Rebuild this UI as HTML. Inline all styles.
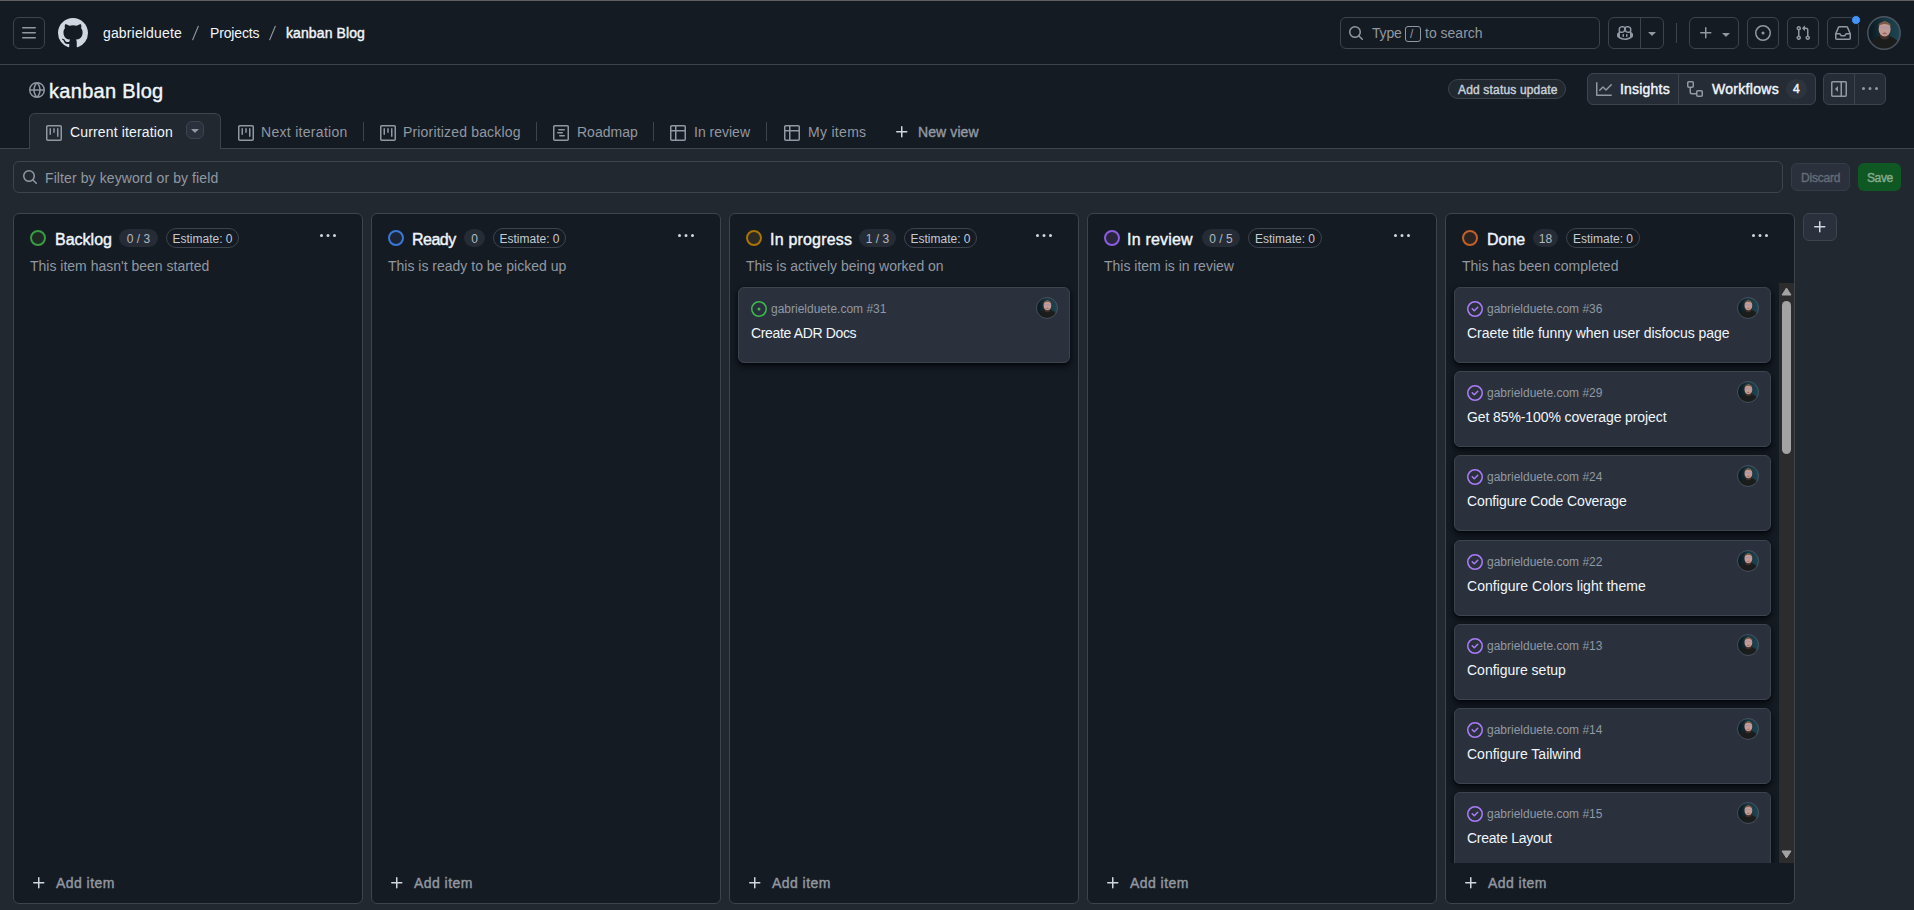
<!DOCTYPE html>
<html><head><meta charset="utf-8">
<style>
*{box-sizing:border-box;margin:0;padding:0}
html,body{width:1914px;height:910px;overflow:hidden;background:#212830}
body{font-family:"Liberation Sans",sans-serif;color:#f0f6fc;position:relative}
.a{position:absolute}
.t{position:absolute;white-space:pre;line-height:1}
.f14{font-size:14px}.f12{font-size:12px}.f16{font-size:16px}.f20{font-size:20px}
.b{font-weight:400;-webkit-text-stroke-width:0.4px}
.mu{color:#9198a1}
.ic{position:absolute;fill:#9198a1}
.btn{position:absolute;border:1px solid #3d444d;border-radius:6px}
</style></head><body>
<!-- HEADER -->
<div class="a" style="left:0;top:0;width:1914px;height:149px;background:#151b23"></div>
<div class="a" style="left:0;top:0;width:1914px;height:1px;background:#5f5f5f"></div>
<div class="a" style="left:0;top:64px;width:1914px;height:1px;background:#3d444d"></div>
<div class="a" style="left:0;top:148px;width:1914px;height:1px;background:#3d444d"></div>

<!-- hamburger -->
<div class="btn" style="left:13px;top:17px;width:32px;height:32px"></div>
<svg class="ic" style="left:21px;top:25px" width="16" height="16" viewBox="0 0 16 16"><path d="M1 2.75A.75.75 0 0 1 1.75 2h12.5a.75.75 0 0 1 0 1.5H1.75A.75.75 0 0 1 1 2.75Zm0 5A.75.75 0 0 1 1.75 7h12.5a.75.75 0 0 1 0 1.5H1.75A.75.75 0 0 1 1 7.75ZM1.75 12h12.5a.75.75 0 0 1 0 1.5H1.75a.75.75 0 0 1 0-1.5Z"/></svg>
<!-- github logo -->
<svg class="ic" style="left:58px;top:18px;fill:#d1d7e0" width="30" height="30" viewBox="0 0 16 16"><path d="M8 0c4.42 0 8 3.58 8 8a8.013 8.013 0 0 1-5.45 7.59c-.4.08-.55-.17-.55-.38 0-.27.01-1.13.01-2.2 0-.75-.25-1.23-.54-1.48 1.780-.2 3.65-.88 3.65-3.95 0-.88-.31-1.59-.82-2.15.08-.2.36-1.02-.08-2.12 0 0-.67-.22-2.2.82-.64-.18-1.320-.27-2-.27-.68 0-1.36.09-2 .27-1.53-1.03-2.2-.82-2.2-.82-.44 1.1-.16 1.92-.08 2.12-.51.56-.82 1.28-.82 2.15 0 3.06 1.86 3.75 3.64 3.95-.23.2-.44.55-.51 1.07-.46.21-1.61.55-2.33-.66-.15-.24-.6-.83-1.23-.82-.67.01-.27.38.01.53.34.19.73.9.82 1.13.16.45.68 1.31 2.690.94 0 .67.01 1.3.01 1.49 0 .21-.15.45-.55.38A7.995 7.995 0 0 1 0 8c0-4.42 3.58-8 8-8Z"/></svg>
<!-- breadcrumbs -->
<div class="t f14" style="left:103px;top:26px;letter-spacing:0.15px;color:#f0f6fc">gabrielduete</div>
<svg class="a" style="left:190px;top:24px" width="10" height="18"><line x1="8.3" y1="2.3" x2="2.7" y2="15.7" stroke="#9198a1" stroke-width="1.1" stroke-linecap="round"/></svg>
<div class="t f14" style="left:210px;top:26px;letter-spacing:-0.15px;color:#f0f6fc">Projects</div>
<svg class="a" style="left:267px;top:24px" width="10" height="18"><line x1="8.3" y1="2.3" x2="2.7" y2="15.7" stroke="#9198a1" stroke-width="1.1" stroke-linecap="round"/></svg>
<div class="t f14 b" style="left:286px;top:26px;letter-spacing:0.1px;color:#f0f6fc">kanban Blog</div>

<!-- search -->
<div class="btn" style="left:1340px;top:17px;width:260px;height:32px"></div>
<svg class="ic" style="left:1348px;top:25px" width="16" height="16" viewBox="0 0 16 16"><path d="M10.68 11.74a6 6 0 0 1-7.922-8.982 6 6 0 0 1 8.982 7.922l3.04 3.04a.749.749 0 0 1-.326 1.275.749.749 0 0 1-.734-.215ZM11.5 7a4.499 4.499 0 1 0-8.997 0A4.499 4.499 0 0 0 11.5 7Z"/></svg>
<div class="t f14 mu" style="left:1372px;top:26px;letter-spacing:-0.2px">Type</div>
<div class="a" style="left:1405px;top:26px;width:16px;height:16px;border:1px solid #9198a1;border-radius:3px"></div>
<div class="t f12 mu" style="left:1410px;top:28px">/</div>
<div class="t f14 mu" style="left:1425px;top:26px">to search</div>

<!-- copilot group -->
<div class="btn" style="left:1608px;top:17px;width:56px;height:32px"></div>
<div class="a" style="left:1640px;top:17px;width:1px;height:32px;background:#3d444d"></div>
<svg class="ic" style="left:1617px;top:25px" width="16" height="16" viewBox="0 0 16 16"><path d="M7.998 15.035c-4.562 0-7.873-2.914-7.998-3.749V9.338c.085-.628.677-1.686 1.588-2.065.013-.07.024-.143.036-.218.029-.183.06-.384.126-.612-.201-.508-.254-1.084-.254-1.656 0-.87.128-1.769.693-2.484.579-.733 1.494-1.124 2.724-1.261 1.206-.134 2.262.034 2.944.765.05.053.096.108.139.165.044-.057.094-.112.143-.165.682-.731 1.738-.899 2.944-.765 1.23.137 2.145.528 2.724 1.261.566.715.693 1.614.693 2.484 0 .572-.053 1.148-.254 1.656.066.228.098.429.126.612.012.076.024.148.037.218.924.385 1.522 1.471 1.591 2.095v1.872c0 .766-3.351 3.795-8.002 3.795Zm0-1.485c2.28 0 4.584-1.11 5.002-1.433V7.862l-.023-.116c-.49.21-1.075.291-1.727.291-1.146 0-2.059-.327-2.71-.991A3.222 3.222 0 0 1 8 6.303a3.24 3.24 0 0 1-.544.743c-.65.664-1.563.991-2.71.991-.652 0-1.236-.081-1.727-.291l-.023.116v4.255c.419.323 2.722 1.433 5.002 1.433ZM6.762 2.83c-.193-.206-.637-.413-1.682-.297-1.019.113-1.479.404-1.713.7-.247.312-.369.789-.369 1.554 0 .793.129 1.171.308 1.371.162.181.519.379 1.442.379.853 0 1.339-.235 1.638-.54.315-.322.527-.827.617-1.553.117-.935-.037-1.395-.241-1.614Zm4.155-.297c-1.044-.116-1.488.091-1.681.297-.204.219-.359.679-.242 1.614.091.726.303 1.231.618 1.553.299.305.784.54 1.638.54.922 0 1.28-.198 1.442-.379.179-.2.308-.578.308-1.371 0-.765-.123-1.242-.37-1.554-.233-.296-.693-.587-1.713-.7Z"/><path d="M6.25 9.037a.75.75 0 0 1 .75.75v1.501a.75.75 0 0 1-1.5 0V9.787a.75.75 0 0 1 .75-.75Zm4.25.75v1.501a.75.75 0 0 1-1.5 0V9.787a.75.75 0 0 1 1.5 0Z"/></svg>
<svg class="ic" style="left:1644px;top:25px" width="16" height="16" viewBox="0 0 16 16"><path d="m4.427 7.427 3.396 3.396a.25.25 0 0 0 .354 0l3.396-3.396A.25.25 0 0 0 11.396 7H4.604a.25.25 0 0 0-.177.427Z"/></svg>
<div class="a" style="left:1676px;top:23px;width:1px;height:20px;background:#3d444d"></div>
<!-- plus group -->
<div class="btn" style="left:1689px;top:17px;width:50px;height:32px"></div>
<svg class="ic" style="left:1698px;top:25px" width="16" height="16" viewBox="0 0 16 16"><path d="M7.75 2a.75.75 0 0 1 .75.75V7h4.25a.75.75 0 0 1 0 1.5H8.5v4.25a.75.75 0 0 1-1.5 0V8.5H2.75a.75.75 0 0 1 0-1.5H7V2.75A.75.75 0 0 1 7.75 2Z"/></svg>
<svg class="ic" style="left:1718px;top:26px" width="16" height="16" viewBox="0 0 16 16"><path d="m4.427 7.427 3.396 3.396a.25.25 0 0 0 .354 0l3.396-3.396A.25.25 0 0 0 11.396 7H4.604a.25.25 0 0 0-.177.427Z"/></svg>
<!-- issues -->
<div class="btn" style="left:1747px;top:17px;width:32px;height:32px"></div>
<svg class="ic" style="left:1755px;top:25px" width="16" height="16" viewBox="0 0 16 16"><path d="M8 9.5a1.5 1.5 0 1 0 0-3 1.5 1.5 0 0 0 0 3Z"/><path d="M8 0a8 8 0 1 1 0 16A8 8 0 0 1 8 0ZM1.5 8a6.5 6.5 0 1 0 13 0 6.5 6.5 0 0 0-13 0Z"/></svg>
<!-- PR -->
<div class="btn" style="left:1787px;top:17px;width:32px;height:32px"></div>
<svg class="ic" style="left:1795px;top:25px" width="16" height="16" viewBox="0 0 16 16"><path d="M1.5 3.25a2.25 2.25 0 1 1 3 2.122v5.256a2.251 2.251 0 1 1-1.5 0V5.372A2.25 2.25 0 0 1 1.5 3.25Zm5.677-.177L9.573.677A.25.25 0 0 1 10 .854V2.5h1A2.5 2.5 0 0 1 13.5 5v5.628a2.251 2.251 0 1 1-1.5 0V5a1 1 0 0 0-1-1h-1v1.646a.25.25 0 0 1-.427.177L7.177 3.427a.25.25 0 0 1 0-.354ZM3.75 2.5a.75.75 0 1 0 0 1.5.75.75 0 0 0 0-1.5Zm0 9.5a.75.75 0 1 0 0 1.5.75.75 0 0 0 0-1.5Zm8.25.75a.75.75 0 1 0 1.5 0 .75.75 0 0 0-1.5 0Z"/></svg>
<!-- inbox -->
<div class="btn" style="left:1827px;top:17px;width:32px;height:32px"></div>
<svg class="ic" style="left:1835px;top:25px" width="16" height="16" viewBox="0 0 16 16"><path d="M2.8 2.06A1.75 1.75 0 0 1 4.41 1h7.18c.7 0 1.333.417 1.61 1.06l2.74 6.395c.04.093.06.194.06.295v4.5A1.75 1.75 0 0 1 14.25 15H1.75A1.75 1.75 0 0 1 0 13.25v-4.5c0-.101.02-.202.06-.295Zm1.61.44a.25.25 0 0 0-.23.152L1.887 8H4.75a.75.75 0 0 1 .6.3L6.625 10h2.75l1.275-1.7a.75.75 0 0 1 .6-.3h2.863L11.82 2.652a.25.25 0 0 0-.23-.152Zm10.09 7h-2.875l-1.275 1.7a.75.75 0 0 1-.6.3h-3.5a.75.75 0 0 1-.6-.3L4.375 9.5H1.5v3.75c0 .138.112.25.25.25h12.5a.25.25 0 0 0 .25-.25Z"/></svg>
<div class="a" style="left:1851px;top:15px;width:10px;height:10px;border-radius:50%;background:#4493f8;border:1px solid #151b23"></div>
<!-- avatar -->
<svg class="a" style="left:1867px;top:16px" width="34" height="34" viewBox="0 0 34 34"><defs><clipPath id="kh"><circle cx="17" cy="17" r="16.5"/></clipPath><linearGradient id="gh" x1="0" x2="1" y1="0" y2="0"><stop offset="0" stop-color="#08141a"/><stop offset="0.5" stop-color="#173640"/><stop offset="1" stop-color="#1f4652"/></linearGradient></defs><g clip-path="url(#kh)"><rect width="34" height="34" fill="url(#gh)"/><path d="M1 34 L3 27 C5 23 9 21 13 20 L22 20 C26 21 29.5 23 31.5 27 L34 34Z" fill="#1b1d1d"/><ellipse cx="17.5" cy="20" rx="4.6" ry="3.4" fill="#3e2f2a"/><ellipse cx="17.6" cy="13" rx="6" ry="7.6" fill="#c49a92"/><path d="M11.4 10.5 C10.8 4.2 24.4 4.2 23.8 10.5 C22.3 7 12.9 7 11.4 10.5Z" fill="#7b5b47"/><rect x="12" y="10.8" width="11.2" height="1.8" rx="0.9" fill="#8c8ad6" opacity="0.35"/><ellipse cx="17.6" cy="17.4" rx="2.2" ry="0.9" fill="#9c6464"/></g><circle cx="17" cy="17" r="16.2" fill="none" stroke="#4b5361" stroke-width="1.5"/></svg>

<!-- TITLE ROW -->
<svg class="ic" style="left:29px;top:82px" width="16" height="16" viewBox="0 0 16 16"><path d="M8 0a8 8 0 1 1 0 16A8 8 0 0 1 8 0ZM5.78 8.75a9.64 9.64 0 0 0 1.363 4.177c.255.426.542.832.857 1.215.245-.296.551-.705.857-1.215A9.64 9.64 0 0 0 10.22 8.75Zm4.44-1.5a9.64 9.64 0 0 0-1.363-4.177c-.307-.51-.612-.919-.857-1.215a9.927 9.927 0 0 0-.857 1.215A9.64 9.64 0 0 0 5.78 7.25Zm-5.944 1.5H1.543a6.507 6.507 0 0 0 4.666 5.5c-.123-.181-.24-.365-.352-.552-.715-1.192-1.437-2.874-1.581-4.948Zm-2.733-1.5h2.733c.144-2.074.866-3.756 1.58-4.948.12-.197.237-.381.353-.552a6.507 6.507 0 0 0-4.666 5.5Zm10.181 1.5c-.144 2.074-.866 3.756-1.58 4.948-.12.197-.237.381-.353.552a6.507 6.507 0 0 0 4.666-5.5Zm2.733-1.5a6.507 6.507 0 0 0-4.666-5.5c.123.181.24.365.353.552.714 1.192 1.436 2.874 1.58 4.948Z"/></svg>
<div class="t f20 b" style="left:49px;top:81px;letter-spacing:0.3px;color:#f0f6fc">kanban Blog</div>

<div class="a" style="left:1448px;top:79px;width:118px;height:20px;border:1px solid #3d444d;border-radius:10px;background:#212830"></div>
<div class="t f12 b" style="left:1458px;top:84px;letter-spacing:0.17px;color:#c9d1d9">Add status update</div>

<div class="btn" style="left:1587px;top:73px;width:229px;height:32px;background:#262c36"></div>
<div class="a" style="left:1678px;top:73px;width:1px;height:32px;background:#3d444d"></div>
<svg class="ic" style="left:1596px;top:81px" width="16" height="16" viewBox="0 0 16 16"><path d="M1.5 1.75V13.5h13.75a.75.75 0 0 1 0 1.5H.75a.75.75 0 0 1-.75-.75V1.75a.75.75 0 0 1 1.5 0Zm14.28 2.53-5.25 5.25a.75.75 0 0 1-1.06 0L7 7.06 4.28 9.78a.751.751 0 0 1-1.042-.018.751.751 0 0 1-.018-1.042l3.250-3.25a.75.75 0 0 1 1.06 0L10 7.94l4.72-4.72a.751.751 0 0 1 1.042.018.751.751 0 0 1 .018 1.042Z"/></svg>
<div class="t f14 b" style="left:1620px;top:82px;letter-spacing:0.2px;color:#f0f6fc">Insights</div>
<svg class="ic" style="left:1687px;top:81px" width="16" height="16" viewBox="0 0 16 16"><path d="M0 1.75C0 .784.784 0 1.75 0h3.5C6.216 0 7 .784 7 1.75v3.5A1.75 1.75 0 0 1 5.25 7H4v4a1 1 0 0 0 1 1h4v-1.25C9 9.784 9.784 9 10.750 9h3.5c.966 0 1.75.784 1.75 1.75v3.5A1.75 1.75 0 0 1 14.25 16h-3.5A1.75 1.75 0 0 1 9 14.25v-.75H5A2.5 2.5 0 0 1 2.5 11V7h-.75A1.75 1.75 0 0 1 0 5.25Zm1.75-.25a.25.25 0 0 0-.25.25v3.5c0 .138.112.25.25.25h3.5a.25.25 0 0 0 .25-.25v-3.5a.25.25 0 0 0-.25-.25Zm9 9a.25.25 0 0 0-.25.25v3.5c0 .138.112.25.25.25h3.5a.25.25 0 0 0 .25-.25v-3.5a.25.25 0 0 0-.25-.25Z"/></svg>
<div class="t f14 b" style="left:1712px;top:82px;letter-spacing:0.3px;color:#f0f6fc">Workflows</div>
<div class="a" style="left:1786px;top:79px;width:21px;height:20px;border-radius:10px;background:#2d343e"></div>
<div class="t f12 b" style="left:1793px;top:83px;color:#f0f6fc">4</div>

<div class="btn" style="left:1823px;top:73px;width:63px;height:32px;background:#262c36"></div>
<div class="a" style="left:1854px;top:73px;width:1px;height:32px;background:#3d444d"></div>
<svg class="ic" style="left:1831px;top:81px" width="16" height="16" viewBox="0 0 16 16"><path d="m4.177 7.823 2.396-2.396A.25.25 0 0 1 7 5.604v4.792a.25.25 0 0 1-.427.177L4.177 8.177a.25.25 0 0 1 0-.354Z"/><path d="M0 1.75C0 .784.784 0 1.75 0h12.5C15.216 0 16 .784 16 1.750v12.5A1.75 1.75 0 0 1 14.25 16H1.75A1.75 1.75 0 0 1 0 14.25Zm1.75-.25a.25.25 0 0 0-.25.25v12.5c0 .138.112.25.25.25H9.5v-13Zm12.5 13a.25.25 0 0 0 .25-.25V1.75a.25.25 0 0 0-.25-.25H11v13Z"/></svg>
<svg class="ic" style="left:1862px;top:81px" width="16" height="16" viewBox="0 0 16 16"><path d="M8 9a1.5 1.5 0 1 0 0-3 1.5 1.5 0 0 0 0 3ZM1.5 9a1.5 1.5 0 1 0 0-3 1.5 1.5 0 0 0 0 3Zm13 0a1.5 1.5 0 1 0 0-3 1.5 1.5 0 0 0 0 3Z"/></svg>

<!-- TABS -->
<div class="a" style="left:29px;top:113px;width:192px;height:36px;background:#212830;border:1px solid #3d444d;border-bottom:none;border-radius:6px 6px 0 0"></div>
<svg class="ic" style="left:46px;top:125px" width="16" height="16" viewBox="0 0 16 16"><path d="M1.75 0h12.5C15.216 0 16 .784 16 1.75v12.5A1.75 1.75 0 0 1 14.25 16H1.75A1.75 1.75 0 0 1 0 14.25V1.75C0 .784.784 0 1.75 0ZM1.5 1.75v12.5c0 .138.112.25.25.25h12.5a.25.25 0 0 0 .25-.25V1.75a.25.25 0 0 0-.25-.25H1.75a.25.25 0 0 0-.25.25ZM11.75 3a.75.75 0 0 1 .75.75v7.5a.75.75 0 0 1-1.5 0v-7.5a.75.75 0 0 1 .75-.75Zm-8.25.75a.75.75 0 0 1 1.5 0v5.5a.75.75 0 0 1-1.5 0ZM8 3a.75.75 0 0 1 .75.75v3.5a.75.75 0 0 1-1.5 0v-3.5A.75.75 0 0 1 8 3Z"/></svg>
<div class="t f14" style="left:70px;top:125px;letter-spacing:0.15px;color:#f0f6fc">Current iteration</div>
<div class="a" style="left:186px;top:121px;width:18px;height:18px;border:1px solid #3d444d;border-radius:6px;background:#2a313c"></div>
<svg class="ic" style="left:187px;top:122px" width="16" height="16" viewBox="0 0 16 16"><path d="m4.427 7.427 3.396 3.396a.25.25 0 0 0 .354 0l3.396-3.396A.25.25 0 0 0 11.396 7H4.604a.25.25 0 0 0-.177.427Z"/></svg>

<svg class="ic" style="left:238px;top:125px" width="16" height="16" viewBox="0 0 16 16"><path d="M1.75 0h12.5C15.216 0 16 .784 16 1.75v12.5A1.75 1.75 0 0 1 14.25 16H1.75A1.75 1.75 0 0 1 0 14.25V1.75C0 .784.784 0 1.75 0ZM1.5 1.75v12.5c0 .138.112.25.25.25h12.5a.25.25 0 0 0 .25-.25V1.75a.25.25 0 0 0-.25-.25H1.75a.25.25 0 0 0-.25.25ZM11.75 3a.75.75 0 0 1 .75.75v7.5a.75.75 0 0 1-1.5 0v-7.5a.75.75 0 0 1 .75-.75Zm-8.25.75a.75.75 0 0 1 1.5 0v5.5a.75.75 0 0 1-1.5 0ZM8 3a.75.75 0 0 1 .75.75v3.5a.75.75 0 0 1-1.5 0v-3.5A.75.75 0 0 1 8 3Z"/></svg>
<div class="t f14 mu" style="left:261px;top:125px;letter-spacing:0.3px">Next iteration</div>
<div class="a" style="left:363px;top:122px;width:1px;height:19px;background:#3d444d"></div>
<svg class="ic" style="left:380px;top:125px" width="16" height="16" viewBox="0 0 16 16"><path d="M1.75 0h12.5C15.216 0 16 .784 16 1.75v12.5A1.75 1.75 0 0 1 14.25 16H1.75A1.75 1.75 0 0 1 0 14.25V1.75C0 .784.784 0 1.75 0ZM1.5 1.75v12.5c0 .138.112.25.25.25h12.5a.25.25 0 0 0 .25-.25V1.75a.25.25 0 0 0-.25-.25H1.75a.25.25 0 0 0-.25.25ZM11.75 3a.75.75 0 0 1 .75.75v7.5a.75.75 0 0 1-1.5 0v-7.5a.75.75 0 0 1 .75-.75Zm-8.25.75a.75.75 0 0 1 1.5 0v5.5a.75.75 0 0 1-1.5 0ZM8 3a.75.75 0 0 1 .75.75v3.5a.75.75 0 0 1-1.5 0v-3.5A.75.75 0 0 1 8 3Z"/></svg>
<div class="t f14 mu" style="left:403px;top:125px;letter-spacing:0.17px">Prioritized backlog</div>
<div class="a" style="left:536px;top:122px;width:1px;height:19px;background:#3d444d"></div>
<svg class="ic" style="left:553px;top:125px" width="16" height="16" viewBox="0 0 16 16"><path d="M4.75 7a.75.75 0 0 0 0 1.5h4.5a.75.75 0 0 0 0-1.5h-4.5ZM5 4.75A.75.75 0 0 1 5.75 4h5.5a.75.75 0 0 1 0 1.5h-5.5A.75.75 0 0 1 5 4.75ZM6.75 10a.75.75 0 0 0 0 1.5h4.5a.75.75 0 0 0 0-1.5h-4.5Z"/><path d="M0 1.75C0 .784.784 0 1.75 0h12.5C15.216 0 16 .784 16 1.75v12.5A1.75 1.75 0 0 1 14.25 16H1.75A1.75 1.75 0 0 1 0 14.25Zm1.75-.25a.25.25 0 0 0-.25.25v12.5c0 .138.112.25.25.25h12.5a.25.25 0 0 0 .25-.25V1.75a.25.25 0 0 0-.25-.25Z"/></svg>
<div class="t f14 mu" style="left:577px;top:125px">Roadmap</div>
<div class="a" style="left:653px;top:122px;width:1px;height:19px;background:#3d444d"></div>
<svg class="ic" style="left:670px;top:125px" width="16" height="16" viewBox="0 0 16 16"><path d="M0 1.75C0 .784.784 0 1.75 0h12.5C15.216 0 16 .784 16 1.75v12.5A1.75 1.75 0 0 1 14.25 16H1.75A1.75 1.75 0 0 1 0 14.25ZM6.5 6.5v8h7.75a.25.25 0 0 0 .25-.25V6.5Zm8-1.5V1.75a.25.25 0 0 0-.25-.25H6.5V5Zm-13 1.5v7.750c0 .138.112.25.25.25H5v-8ZM5 5V1.5H1.75a.25.25 0 0 0-.25.25V5Z"/></svg>
<div class="t f14 mu" style="left:694px;top:125px">In review</div>
<div class="a" style="left:766px;top:122px;width:1px;height:19px;background:#3d444d"></div>
<svg class="ic" style="left:784px;top:125px" width="16" height="16" viewBox="0 0 16 16"><path d="M0 1.75C0 .784.784 0 1.75 0h12.5C15.216 0 16 .784 16 1.75v12.5A1.75 1.75 0 0 1 14.25 16H1.75A1.75 1.75 0 0 1 0 14.25ZM6.5 6.5v8h7.75a.25.25 0 0 0 .25-.25V6.5Zm8-1.5V1.75a.25.25 0 0 0-.25-.25H6.5V5Zm-13 1.5v7.750c0 .138.112.25.25.25H5v-8ZM5 5V1.5H1.75a.25.25 0 0 0-.25.25V5Z"/></svg>
<div class="t f14 mu" style="left:808px;top:125px;letter-spacing:0.3px">My items</div>
<svg class="ic" style="left:894px;top:124px;fill:#d1d7e0" width="16" height="16" viewBox="0 0 16 16"><path d="M7.75 2a.75.75 0 0 1 .75.75V7h4.25a.75.75 0 0 1 0 1.5H8.5v4.25a.75.75 0 0 1-1.5 0V8.5H2.75a.75.75 0 0 1 0-1.5H7V2.75A.75.75 0 0 1 7.75 2Z"/></svg>
<div class="t f14 b mu" style="left:918px;top:125px;letter-spacing:0.1px">New view</div>

<!-- BOARD -->
<!--BOARD-->
<div class="btn" style="left:13px;top:161px;width:1770px;height:32px"></div>
<svg class="ic" style="left:22px;top:169px" width="16" height="16" viewBox="0 0 16 16"><path d="M10.68 11.74a6 6 0 0 1-7.922-8.982 6 6 0 0 1 8.982 7.922l3.04 3.04a.749.749 0 0 1-.326 1.275.749.749 0 0 1-.734-.215ZM11.5 7a4.499 4.499 0 1 0-8.997 0A4.499 4.499 0 0 0 11.5 7Z"/></svg>
<div class="t f14 mu" style="left:45px;top:171px;letter-spacing:0.1px">Filter by keyword or by field</div>
<div class="a" style="left:1791px;top:163px;width:59px;height:28px;border:1px solid #353c46;border-radius:6px;background:#2a313c"></div>
<div class="t f12 b" style="left:1801px;top:172px;letter-spacing:-0.2px;color:#656c76">Discard</div>
<div class="a" style="left:1858px;top:163px;width:43px;height:28px;border-radius:6px;background:#105823"></div>
<div class="t f12 b" style="left:1867px;top:172px;letter-spacing:-0.4px;color:#86ab8f">Save</div>
<div class="a" style="left:1803px;top:213px;width:34px;height:28px;border:1px solid #3d444d;border-radius:6px;background:#2a313c"></div>
<svg class="ic" style="left:1812px;top:219px;fill:#d1d7e0" width="16" height="16" viewBox="0 0 16 16"><path d="M7.75 2a.75.75 0 0 1 .75.75V7h4.25a.75.75 0 0 1 0 1.5H8.5v4.25a.75.75 0 0 1-1.5 0V8.5H2.75a.75.75 0 0 1 0-1.5H7V2.75A.75.75 0 0 1 7.75 2Z"/></svg>
<div class="a" style="left:13px;top:213px;width:350px;height:691px;background:#151b23;border:1px solid #3d444d;border-radius:6px"></div>
<div class="a" style="left:30px;top:230px;width:16px;height:16px;border-radius:50%;border:2px solid #3b9a45;background:#1d2a24"></div>
<div class="t f16 b" style="left:55px;top:232px;letter-spacing:0px;color:#f0f6fc">Backlog</div>
<div class="a" style="left:119px;top:229px;width:39px;height:18px;border-radius:9px;background:#252c36"></div>
<div class="t f12" style="left:119px;top:233px;width:39px;text-align:center;color:#b3b9c0">0 / 3</div>
<div class="a" style="left:166px;top:228px;width:73px;height:20px;border-radius:10px;border:1px solid #3d444d"></div>
<div class="t f12" style="left:166px;top:233px;width:73px;text-align:center;color:#c4cad1">Estimate: 0</div>
<div class="t f14 mu" style="left:30px;top:259px">This item hasn't been started</div>
<svg class="ic" style="left:320px;top:228px;fill:#d1d7e0" width="16" height="16" viewBox="0 0 16 16"><path d="M8 9a1.5 1.5 0 1 0 0-3 1.5 1.5 0 0 0 0 3ZM1.5 9a1.5 1.5 0 1 0 0-3 1.5 1.5 0 0 0 0 3Zm13 0a1.5 1.5 0 1 0 0-3 1.5 1.5 0 0 0 0 3Z"/></svg>
<svg class="ic" style="left:31px;top:875px;fill:#d1d7e0" width="16" height="16" viewBox="0 0 16 16"><path d="M7.75 2a.75.75 0 0 1 .75.75V7h4.25a.75.75 0 0 1 0 1.5H8.5v4.25a.75.75 0 0 1-1.5 0V8.5H2.75a.75.75 0 0 1 0-1.5H7V2.75A.75.75 0 0 1 7.75 2Z"/></svg>
<div class="t f14 b mu" style="left:56px;top:876px;letter-spacing:0.45px">Add item</div>
<div class="a" style="left:371px;top:213px;width:350px;height:691px;background:#151b23;border:1px solid #3d444d;border-radius:6px"></div>
<div class="a" style="left:388px;top:230px;width:16px;height:16px;border-radius:50%;border:2px solid #3a78d8;background:#1c2538"></div>
<div class="t f16 b" style="left:412px;top:232px;letter-spacing:-0.5px;color:#f0f6fc">Ready</div>
<div class="a" style="left:464px;top:229px;width:21px;height:18px;border-radius:9px;background:#252c36"></div>
<div class="t f12" style="left:464px;top:233px;width:21px;text-align:center;color:#b3b9c0">0</div>
<div class="a" style="left:493px;top:228px;width:73px;height:20px;border-radius:10px;border:1px solid #3d444d"></div>
<div class="t f12" style="left:493px;top:233px;width:73px;text-align:center;color:#c4cad1">Estimate: 0</div>
<div class="t f14 mu" style="left:388px;top:259px">This is ready to be picked up</div>
<svg class="ic" style="left:678px;top:228px;fill:#d1d7e0" width="16" height="16" viewBox="0 0 16 16"><path d="M8 9a1.5 1.5 0 1 0 0-3 1.5 1.5 0 0 0 0 3ZM1.5 9a1.5 1.5 0 1 0 0-3 1.5 1.5 0 0 0 0 3Zm13 0a1.5 1.5 0 1 0 0-3 1.5 1.5 0 0 0 0 3Z"/></svg>
<svg class="ic" style="left:389px;top:875px;fill:#d1d7e0" width="16" height="16" viewBox="0 0 16 16"><path d="M7.75 2a.75.75 0 0 1 .75.75V7h4.25a.75.75 0 0 1 0 1.5H8.5v4.25a.75.75 0 0 1-1.5 0V8.5H2.75a.75.75 0 0 1 0-1.5H7V2.75A.75.75 0 0 1 7.75 2Z"/></svg>
<div class="t f14 b mu" style="left:414px;top:876px;letter-spacing:0.45px">Add item</div>
<div class="a" style="left:729px;top:213px;width:350px;height:691px;background:#151b23;border:1px solid #3d444d;border-radius:6px"></div>
<div class="a" style="left:746px;top:230px;width:16px;height:16px;border-radius:50%;border:2px solid #a87406;background:#2c2a22"></div>
<div class="t f16 b" style="left:770px;top:232px;letter-spacing:0.2px;color:#f0f6fc">In progress</div>
<div class="a" style="left:859px;top:229px;width:37px;height:18px;border-radius:9px;background:#252c36"></div>
<div class="t f12" style="left:859px;top:233px;width:37px;text-align:center;color:#b3b9c0">1 / 3</div>
<div class="a" style="left:904px;top:228px;width:73px;height:20px;border-radius:10px;border:1px solid #3d444d"></div>
<div class="t f12" style="left:904px;top:233px;width:73px;text-align:center;color:#c4cad1">Estimate: 0</div>
<div class="t f14 mu" style="left:746px;top:259px">This is actively being worked on</div>
<svg class="ic" style="left:1036px;top:228px;fill:#d1d7e0" width="16" height="16" viewBox="0 0 16 16"><path d="M8 9a1.5 1.5 0 1 0 0-3 1.5 1.5 0 0 0 0 3ZM1.5 9a1.5 1.5 0 1 0 0-3 1.5 1.5 0 0 0 0 3Zm13 0a1.5 1.5 0 1 0 0-3 1.5 1.5 0 0 0 0 3Z"/></svg>
<svg class="ic" style="left:747px;top:875px;fill:#d1d7e0" width="16" height="16" viewBox="0 0 16 16"><path d="M7.75 2a.75.75 0 0 1 .75.75V7h4.25a.75.75 0 0 1 0 1.5H8.5v4.25a.75.75 0 0 1-1.5 0V8.5H2.75a.75.75 0 0 1 0-1.5H7V2.75A.75.75 0 0 1 7.75 2Z"/></svg>
<div class="t f14 b mu" style="left:772px;top:876px;letter-spacing:0.45px">Add item</div>
<div class="a" style="left:1087px;top:213px;width:350px;height:691px;background:#151b23;border:1px solid #3d444d;border-radius:6px"></div>
<div class="a" style="left:1104px;top:230px;width:16px;height:16px;border-radius:50%;border:2px solid #8b5de0;background:#29263d"></div>
<div class="t f16 b" style="left:1127px;top:232px;letter-spacing:0.2px;color:#f0f6fc">In review</div>
<div class="a" style="left:1202px;top:229px;width:38px;height:18px;border-radius:9px;background:#252c36"></div>
<div class="t f12" style="left:1202px;top:233px;width:38px;text-align:center;color:#b3b9c0">0 / 5</div>
<div class="a" style="left:1248px;top:228px;width:74px;height:20px;border-radius:10px;border:1px solid #3d444d"></div>
<div class="t f12" style="left:1248px;top:233px;width:74px;text-align:center;color:#c4cad1">Estimate: 0</div>
<div class="t f14 mu" style="left:1104px;top:259px">This item is in review</div>
<svg class="ic" style="left:1394px;top:228px;fill:#d1d7e0" width="16" height="16" viewBox="0 0 16 16"><path d="M8 9a1.5 1.5 0 1 0 0-3 1.5 1.5 0 0 0 0 3ZM1.5 9a1.5 1.5 0 1 0 0-3 1.5 1.5 0 0 0 0 3Zm13 0a1.5 1.5 0 1 0 0-3 1.5 1.5 0 0 0 0 3Z"/></svg>
<svg class="ic" style="left:1105px;top:875px;fill:#d1d7e0" width="16" height="16" viewBox="0 0 16 16"><path d="M7.75 2a.75.75 0 0 1 .75.75V7h4.25a.75.75 0 0 1 0 1.5H8.5v4.25a.75.75 0 0 1-1.5 0V8.5H2.75a.75.75 0 0 1 0-1.5H7V2.75A.75.75 0 0 1 7.75 2Z"/></svg>
<div class="t f14 b mu" style="left:1130px;top:876px;letter-spacing:0.45px">Add item</div>
<div class="a" style="left:1445px;top:213px;width:350px;height:691px;background:#151b23;border:1px solid #3d444d;border-radius:6px"></div>
<div class="a" style="left:1462px;top:230px;width:16px;height:16px;border-radius:50%;border:2px solid #c0602a;background:#2a2523"></div>
<div class="t f16 b" style="left:1487px;top:232px;letter-spacing:0px;color:#f0f6fc">Done</div>
<div class="a" style="left:1533px;top:229px;width:25px;height:18px;border-radius:9px;background:#252c36"></div>
<div class="t f12" style="left:1533px;top:233px;width:25px;text-align:center;color:#b3b9c0">18</div>
<div class="a" style="left:1566px;top:228px;width:74px;height:20px;border-radius:10px;border:1px solid #3d444d"></div>
<div class="t f12" style="left:1566px;top:233px;width:74px;text-align:center;color:#c4cad1">Estimate: 0</div>
<div class="t f14 mu" style="left:1462px;top:259px">This has been completed</div>
<svg class="ic" style="left:1752px;top:228px;fill:#d1d7e0" width="16" height="16" viewBox="0 0 16 16"><path d="M8 9a1.5 1.5 0 1 0 0-3 1.5 1.5 0 0 0 0 3ZM1.5 9a1.5 1.5 0 1 0 0-3 1.5 1.5 0 0 0 0 3Zm13 0a1.5 1.5 0 1 0 0-3 1.5 1.5 0 0 0 0 3Z"/></svg>
<svg class="ic" style="left:1463px;top:875px;fill:#d1d7e0" width="16" height="16" viewBox="0 0 16 16"><path d="M7.75 2a.75.75 0 0 1 .75.75V7h4.25a.75.75 0 0 1 0 1.5H8.5v4.25a.75.75 0 0 1-1.5 0V8.5H2.75a.75.75 0 0 1 0-1.5H7V2.75A.75.75 0 0 1 7.75 2Z"/></svg>
<div class="t f14 b mu" style="left:1488px;top:876px;letter-spacing:0.45px">Add item</div>
<div class="a" style="left:738px;top:287px;width:332px;height:76px;background:#2a313c;border:1px solid #3d444d;border-radius:6px;box-shadow:0 1px 1px rgba(1,4,9,0.4),0 3px 6px rgba(1,4,9,0.85)"></div><svg class="ic" style="left:751px;top:301px;fill:#3fb950" width="16" height="16" viewBox="0 0 16 16"><path d="M8 9.5a1.5 1.5 0 1 0 0-3 1.5 1.5 0 0 0 0 3Z"/><path d="M8 0a8 8 0 1 1 0 16A8 8 0 0 1 8 0ZM1.5 8a6.5 6.5 0 1 0 13 0 6.5 6.5 0 0 0-13 0Z"/></svg><div class="t f12 mu" style="left:771px;top:303px">gabrielduete.com #31</div><div class="t f14" style="left:751px;top:326px;letter-spacing:-0.35px;color:#f0f6fc">Create ADR Docs</div><svg class="a" style="left:1036px;top:297px" width="22" height="22" viewBox="0 0 34 34"><defs><clipPath id="k1"><circle cx="17" cy="17" r="16.5"/></clipPath><linearGradient id="g1" x1="0" x2="1" y1="0" y2="0"><stop offset="0" stop-color="#08141a"/><stop offset="0.5" stop-color="#173640"/><stop offset="1" stop-color="#1f4652"/></linearGradient></defs><g clip-path="url(#k1)"><rect width="34" height="34" fill="url(#g1)"/><path d="M1 34 L3 27 C5 23 9 21 13 20 L22 20 C26 21 29.5 23 31.5 27 L34 34Z" fill="#1b1d1d"/><ellipse cx="17.5" cy="20" rx="4.6" ry="3.4" fill="#3e2f2a"/><ellipse cx="17.6" cy="13" rx="6" ry="7.6" fill="#c49a92"/><path d="M11.4 10.5 C10.8 4.2 24.4 4.2 23.8 10.5 C22.3 7 12.9 7 11.4 10.5Z" fill="#7b5b47"/><rect x="12" y="10.8" width="11.2" height="1.8" rx="0.9" fill="#8c8ad6" opacity="0.35"/><ellipse cx="17.6" cy="17.4" rx="2.2" ry="0.9" fill="#9c6464"/></g><circle cx="17" cy="17" r="16.2" fill="none" stroke="#4b5361" stroke-width="1.5"/></svg>
<div class="a" style="left:1446px;top:283px;width:348px;height:580px;overflow:hidden">
<div class="a" style="left:8px;top:4px;width:317px;height:76px;background:#2a313c;border:1px solid #3d444d;border-radius:6px;box-shadow:0 1px 1px rgba(1,4,9,0.4),0 3px 6px rgba(1,4,9,0.85)"></div><svg class="ic" style="left:21px;top:18px;fill:#ab7df8" width="16" height="16" viewBox="0 0 16 16"><path d="M11.28 6.78a.75.75 0 0 0-1.06-1.06L7.25 8.69 5.78 7.22a.75.75 0 0 0-1.06 1.06l2 2a.75.75 0 0 0 1.06 0l3.5-3.5Z"/><path d="M16 8A8 8 0 1 1 0 8a8 8 0 0 1 16 0Zm-1.5 0a6.5 6.5 0 1 0-13 0 6.5 6.5 0 0 0 13 0Z"/></svg><div class="t f12 mu" style="left:41px;top:20px">gabrielduete.com #36</div><div class="t f14" style="left:21px;top:43px;letter-spacing:-0.05px;color:#f0f6fc">Craete title funny when user disfocus page</div><svg class="a" style="left:291px;top:14px" width="22" height="22" viewBox="0 0 34 34"><defs><clipPath id="k2"><circle cx="17" cy="17" r="16.5"/></clipPath><linearGradient id="g2" x1="0" x2="1" y1="0" y2="0"><stop offset="0" stop-color="#08141a"/><stop offset="0.5" stop-color="#173640"/><stop offset="1" stop-color="#1f4652"/></linearGradient></defs><g clip-path="url(#k2)"><rect width="34" height="34" fill="url(#g2)"/><path d="M1 34 L3 27 C5 23 9 21 13 20 L22 20 C26 21 29.5 23 31.5 27 L34 34Z" fill="#1b1d1d"/><ellipse cx="17.5" cy="20" rx="4.6" ry="3.4" fill="#3e2f2a"/><ellipse cx="17.6" cy="13" rx="6" ry="7.6" fill="#c49a92"/><path d="M11.4 10.5 C10.8 4.2 24.4 4.2 23.8 10.5 C22.3 7 12.9 7 11.4 10.5Z" fill="#7b5b47"/><rect x="12" y="10.8" width="11.2" height="1.8" rx="0.9" fill="#8c8ad6" opacity="0.35"/><ellipse cx="17.6" cy="17.4" rx="2.2" ry="0.9" fill="#9c6464"/></g><circle cx="17" cy="17" r="16.2" fill="none" stroke="#4b5361" stroke-width="1.5"/></svg><div class="a" style="left:8px;top:88px;width:317px;height:76px;background:#2a313c;border:1px solid #3d444d;border-radius:6px;box-shadow:0 1px 1px rgba(1,4,9,0.4),0 3px 6px rgba(1,4,9,0.85)"></div><svg class="ic" style="left:21px;top:102px;fill:#ab7df8" width="16" height="16" viewBox="0 0 16 16"><path d="M11.28 6.78a.75.75 0 0 0-1.06-1.06L7.25 8.69 5.78 7.22a.75.75 0 0 0-1.06 1.06l2 2a.75.75 0 0 0 1.06 0l3.5-3.5Z"/><path d="M16 8A8 8 0 1 1 0 8a8 8 0 0 1 16 0Zm-1.5 0a6.5 6.5 0 1 0-13 0 6.5 6.5 0 0 0 13 0Z"/></svg><div class="t f12 mu" style="left:41px;top:104px">gabrielduete.com #29</div><div class="t f14" style="left:21px;top:127px;letter-spacing:-0.1px;color:#f0f6fc">Get 85%-100% coverage project</div><svg class="a" style="left:291px;top:98px" width="22" height="22" viewBox="0 0 34 34"><defs><clipPath id="k3"><circle cx="17" cy="17" r="16.5"/></clipPath><linearGradient id="g3" x1="0" x2="1" y1="0" y2="0"><stop offset="0" stop-color="#08141a"/><stop offset="0.5" stop-color="#173640"/><stop offset="1" stop-color="#1f4652"/></linearGradient></defs><g clip-path="url(#k3)"><rect width="34" height="34" fill="url(#g3)"/><path d="M1 34 L3 27 C5 23 9 21 13 20 L22 20 C26 21 29.5 23 31.5 27 L34 34Z" fill="#1b1d1d"/><ellipse cx="17.5" cy="20" rx="4.6" ry="3.4" fill="#3e2f2a"/><ellipse cx="17.6" cy="13" rx="6" ry="7.6" fill="#c49a92"/><path d="M11.4 10.5 C10.8 4.2 24.4 4.2 23.8 10.5 C22.3 7 12.9 7 11.4 10.5Z" fill="#7b5b47"/><rect x="12" y="10.8" width="11.2" height="1.8" rx="0.9" fill="#8c8ad6" opacity="0.35"/><ellipse cx="17.6" cy="17.4" rx="2.2" ry="0.9" fill="#9c6464"/></g><circle cx="17" cy="17" r="16.2" fill="none" stroke="#4b5361" stroke-width="1.5"/></svg><div class="a" style="left:8px;top:172px;width:317px;height:76px;background:#2a313c;border:1px solid #3d444d;border-radius:6px;box-shadow:0 1px 1px rgba(1,4,9,0.4),0 3px 6px rgba(1,4,9,0.85)"></div><svg class="ic" style="left:21px;top:186px;fill:#ab7df8" width="16" height="16" viewBox="0 0 16 16"><path d="M11.28 6.78a.75.75 0 0 0-1.06-1.06L7.25 8.69 5.78 7.22a.75.75 0 0 0-1.06 1.06l2 2a.75.75 0 0 0 1.06 0l3.5-3.5Z"/><path d="M16 8A8 8 0 1 1 0 8a8 8 0 0 1 16 0Zm-1.5 0a6.5 6.5 0 1 0-13 0 6.5 6.5 0 0 0 13 0Z"/></svg><div class="t f12 mu" style="left:41px;top:188px">gabrielduete.com #24</div><div class="t f14" style="left:21px;top:211px;letter-spacing:-0.13px;color:#f0f6fc">Configure Code Coverage</div><svg class="a" style="left:291px;top:182px" width="22" height="22" viewBox="0 0 34 34"><defs><clipPath id="k4"><circle cx="17" cy="17" r="16.5"/></clipPath><linearGradient id="g4" x1="0" x2="1" y1="0" y2="0"><stop offset="0" stop-color="#08141a"/><stop offset="0.5" stop-color="#173640"/><stop offset="1" stop-color="#1f4652"/></linearGradient></defs><g clip-path="url(#k4)"><rect width="34" height="34" fill="url(#g4)"/><path d="M1 34 L3 27 C5 23 9 21 13 20 L22 20 C26 21 29.5 23 31.5 27 L34 34Z" fill="#1b1d1d"/><ellipse cx="17.5" cy="20" rx="4.6" ry="3.4" fill="#3e2f2a"/><ellipse cx="17.6" cy="13" rx="6" ry="7.6" fill="#c49a92"/><path d="M11.4 10.5 C10.8 4.2 24.4 4.2 23.8 10.5 C22.3 7 12.9 7 11.4 10.5Z" fill="#7b5b47"/><rect x="12" y="10.8" width="11.2" height="1.8" rx="0.9" fill="#8c8ad6" opacity="0.35"/><ellipse cx="17.6" cy="17.4" rx="2.2" ry="0.9" fill="#9c6464"/></g><circle cx="17" cy="17" r="16.2" fill="none" stroke="#4b5361" stroke-width="1.5"/></svg><div class="a" style="left:8px;top:257px;width:317px;height:76px;background:#2a313c;border:1px solid #3d444d;border-radius:6px;box-shadow:0 1px 1px rgba(1,4,9,0.4),0 3px 6px rgba(1,4,9,0.85)"></div><svg class="ic" style="left:21px;top:271px;fill:#ab7df8" width="16" height="16" viewBox="0 0 16 16"><path d="M11.28 6.78a.75.75 0 0 0-1.06-1.06L7.25 8.69 5.78 7.22a.75.75 0 0 0-1.06 1.06l2 2a.75.75 0 0 0 1.06 0l3.5-3.5Z"/><path d="M16 8A8 8 0 1 1 0 8a8 8 0 0 1 16 0Zm-1.5 0a6.5 6.5 0 1 0-13 0 6.5 6.5 0 0 0 13 0Z"/></svg><div class="t f12 mu" style="left:41px;top:273px">gabrielduete.com #22</div><div class="t f14" style="left:21px;top:296px;letter-spacing:0.05px;color:#f0f6fc">Configure Colors light theme</div><svg class="a" style="left:291px;top:267px" width="22" height="22" viewBox="0 0 34 34"><defs><clipPath id="k5"><circle cx="17" cy="17" r="16.5"/></clipPath><linearGradient id="g5" x1="0" x2="1" y1="0" y2="0"><stop offset="0" stop-color="#08141a"/><stop offset="0.5" stop-color="#173640"/><stop offset="1" stop-color="#1f4652"/></linearGradient></defs><g clip-path="url(#k5)"><rect width="34" height="34" fill="url(#g5)"/><path d="M1 34 L3 27 C5 23 9 21 13 20 L22 20 C26 21 29.5 23 31.5 27 L34 34Z" fill="#1b1d1d"/><ellipse cx="17.5" cy="20" rx="4.6" ry="3.4" fill="#3e2f2a"/><ellipse cx="17.6" cy="13" rx="6" ry="7.6" fill="#c49a92"/><path d="M11.4 10.5 C10.8 4.2 24.4 4.2 23.8 10.5 C22.3 7 12.9 7 11.4 10.5Z" fill="#7b5b47"/><rect x="12" y="10.8" width="11.2" height="1.8" rx="0.9" fill="#8c8ad6" opacity="0.35"/><ellipse cx="17.6" cy="17.4" rx="2.2" ry="0.9" fill="#9c6464"/></g><circle cx="17" cy="17" r="16.2" fill="none" stroke="#4b5361" stroke-width="1.5"/></svg><div class="a" style="left:8px;top:341px;width:317px;height:76px;background:#2a313c;border:1px solid #3d444d;border-radius:6px;box-shadow:0 1px 1px rgba(1,4,9,0.4),0 3px 6px rgba(1,4,9,0.85)"></div><svg class="ic" style="left:21px;top:355px;fill:#ab7df8" width="16" height="16" viewBox="0 0 16 16"><path d="M11.28 6.78a.75.75 0 0 0-1.06-1.06L7.25 8.69 5.78 7.22a.75.75 0 0 0-1.06 1.06l2 2a.75.75 0 0 0 1.06 0l3.5-3.5Z"/><path d="M16 8A8 8 0 1 1 0 8a8 8 0 0 1 16 0Zm-1.5 0a6.5 6.5 0 1 0-13 0 6.5 6.5 0 0 0 13 0Z"/></svg><div class="t f12 mu" style="left:41px;top:357px">gabrielduete.com #13</div><div class="t f14" style="left:21px;top:380px;letter-spacing:0px;color:#f0f6fc">Configure setup</div><svg class="a" style="left:291px;top:351px" width="22" height="22" viewBox="0 0 34 34"><defs><clipPath id="k6"><circle cx="17" cy="17" r="16.5"/></clipPath><linearGradient id="g6" x1="0" x2="1" y1="0" y2="0"><stop offset="0" stop-color="#08141a"/><stop offset="0.5" stop-color="#173640"/><stop offset="1" stop-color="#1f4652"/></linearGradient></defs><g clip-path="url(#k6)"><rect width="34" height="34" fill="url(#g6)"/><path d="M1 34 L3 27 C5 23 9 21 13 20 L22 20 C26 21 29.5 23 31.5 27 L34 34Z" fill="#1b1d1d"/><ellipse cx="17.5" cy="20" rx="4.6" ry="3.4" fill="#3e2f2a"/><ellipse cx="17.6" cy="13" rx="6" ry="7.6" fill="#c49a92"/><path d="M11.4 10.5 C10.8 4.2 24.4 4.2 23.8 10.5 C22.3 7 12.9 7 11.4 10.5Z" fill="#7b5b47"/><rect x="12" y="10.8" width="11.2" height="1.8" rx="0.9" fill="#8c8ad6" opacity="0.35"/><ellipse cx="17.6" cy="17.4" rx="2.2" ry="0.9" fill="#9c6464"/></g><circle cx="17" cy="17" r="16.2" fill="none" stroke="#4b5361" stroke-width="1.5"/></svg><div class="a" style="left:8px;top:425px;width:317px;height:76px;background:#2a313c;border:1px solid #3d444d;border-radius:6px;box-shadow:0 1px 1px rgba(1,4,9,0.4),0 3px 6px rgba(1,4,9,0.85)"></div><svg class="ic" style="left:21px;top:439px;fill:#ab7df8" width="16" height="16" viewBox="0 0 16 16"><path d="M11.28 6.78a.75.75 0 0 0-1.06-1.06L7.25 8.69 5.78 7.22a.75.75 0 0 0-1.06 1.06l2 2a.75.75 0 0 0 1.06 0l3.5-3.5Z"/><path d="M16 8A8 8 0 1 1 0 8a8 8 0 0 1 16 0Zm-1.5 0a6.5 6.5 0 1 0-13 0 6.5 6.5 0 0 0 13 0Z"/></svg><div class="t f12 mu" style="left:41px;top:441px">gabrielduete.com #14</div><div class="t f14" style="left:21px;top:464px;letter-spacing:0px;color:#f0f6fc">Configure Tailwind</div><svg class="a" style="left:291px;top:435px" width="22" height="22" viewBox="0 0 34 34"><defs><clipPath id="k7"><circle cx="17" cy="17" r="16.5"/></clipPath><linearGradient id="g7" x1="0" x2="1" y1="0" y2="0"><stop offset="0" stop-color="#08141a"/><stop offset="0.5" stop-color="#173640"/><stop offset="1" stop-color="#1f4652"/></linearGradient></defs><g clip-path="url(#k7)"><rect width="34" height="34" fill="url(#g7)"/><path d="M1 34 L3 27 C5 23 9 21 13 20 L22 20 C26 21 29.5 23 31.5 27 L34 34Z" fill="#1b1d1d"/><ellipse cx="17.5" cy="20" rx="4.6" ry="3.4" fill="#3e2f2a"/><ellipse cx="17.6" cy="13" rx="6" ry="7.6" fill="#c49a92"/><path d="M11.4 10.5 C10.8 4.2 24.4 4.2 23.8 10.5 C22.3 7 12.9 7 11.4 10.5Z" fill="#7b5b47"/><rect x="12" y="10.8" width="11.2" height="1.8" rx="0.9" fill="#8c8ad6" opacity="0.35"/><ellipse cx="17.6" cy="17.4" rx="2.2" ry="0.9" fill="#9c6464"/></g><circle cx="17" cy="17" r="16.2" fill="none" stroke="#4b5361" stroke-width="1.5"/></svg><div class="a" style="left:8px;top:509px;width:317px;height:76px;background:#2a313c;border:1px solid #3d444d;border-radius:6px;box-shadow:0 1px 1px rgba(1,4,9,0.4),0 3px 6px rgba(1,4,9,0.85)"></div><svg class="ic" style="left:21px;top:523px;fill:#ab7df8" width="16" height="16" viewBox="0 0 16 16"><path d="M11.28 6.78a.75.75 0 0 0-1.06-1.06L7.25 8.69 5.78 7.22a.75.75 0 0 0-1.06 1.06l2 2a.75.75 0 0 0 1.06 0l3.5-3.5Z"/><path d="M16 8A8 8 0 1 1 0 8a8 8 0 0 1 16 0Zm-1.5 0a6.5 6.5 0 1 0-13 0 6.5 6.5 0 0 0 13 0Z"/></svg><div class="t f12 mu" style="left:41px;top:525px">gabrielduete.com #15</div><div class="t f14" style="left:21px;top:548px;letter-spacing:-0.25px;color:#f0f6fc">Create Layout</div><svg class="a" style="left:291px;top:519px" width="22" height="22" viewBox="0 0 34 34"><defs><clipPath id="k8"><circle cx="17" cy="17" r="16.5"/></clipPath><linearGradient id="g8" x1="0" x2="1" y1="0" y2="0"><stop offset="0" stop-color="#08141a"/><stop offset="0.5" stop-color="#173640"/><stop offset="1" stop-color="#1f4652"/></linearGradient></defs><g clip-path="url(#k8)"><rect width="34" height="34" fill="url(#g8)"/><path d="M1 34 L3 27 C5 23 9 21 13 20 L22 20 C26 21 29.5 23 31.5 27 L34 34Z" fill="#1b1d1d"/><ellipse cx="17.5" cy="20" rx="4.6" ry="3.4" fill="#3e2f2a"/><ellipse cx="17.6" cy="13" rx="6" ry="7.6" fill="#c49a92"/><path d="M11.4 10.5 C10.8 4.2 24.4 4.2 23.8 10.5 C22.3 7 12.9 7 11.4 10.5Z" fill="#7b5b47"/><rect x="12" y="10.8" width="11.2" height="1.8" rx="0.9" fill="#8c8ad6" opacity="0.35"/><ellipse cx="17.6" cy="17.4" rx="2.2" ry="0.9" fill="#9c6464"/></g><circle cx="17" cy="17" r="16.2" fill="none" stroke="#4b5361" stroke-width="1.5"/></svg>
<div class="a" style="left:333px;top:0;width:15px;height:580px;background:#2c2c2c"></div>
<svg class="a" style="left:333px;top:0" width="15" height="580" viewBox="0 0 15 580"><path d="M3 12 L7.5 5 L12 12Z" fill="#a3a3a3" stroke="#a3a3a3" stroke-width="1" stroke-linejoin="round"/><rect x="3" y="18" width="9" height="153" rx="4.5" fill="#a3a3a3"/><path d="M3 568 L7.5 575 L12 568Z" fill="#a3a3a3" stroke="#a3a3a3" stroke-width="1" stroke-linejoin="round"/></svg>
</div>
</body></html>
